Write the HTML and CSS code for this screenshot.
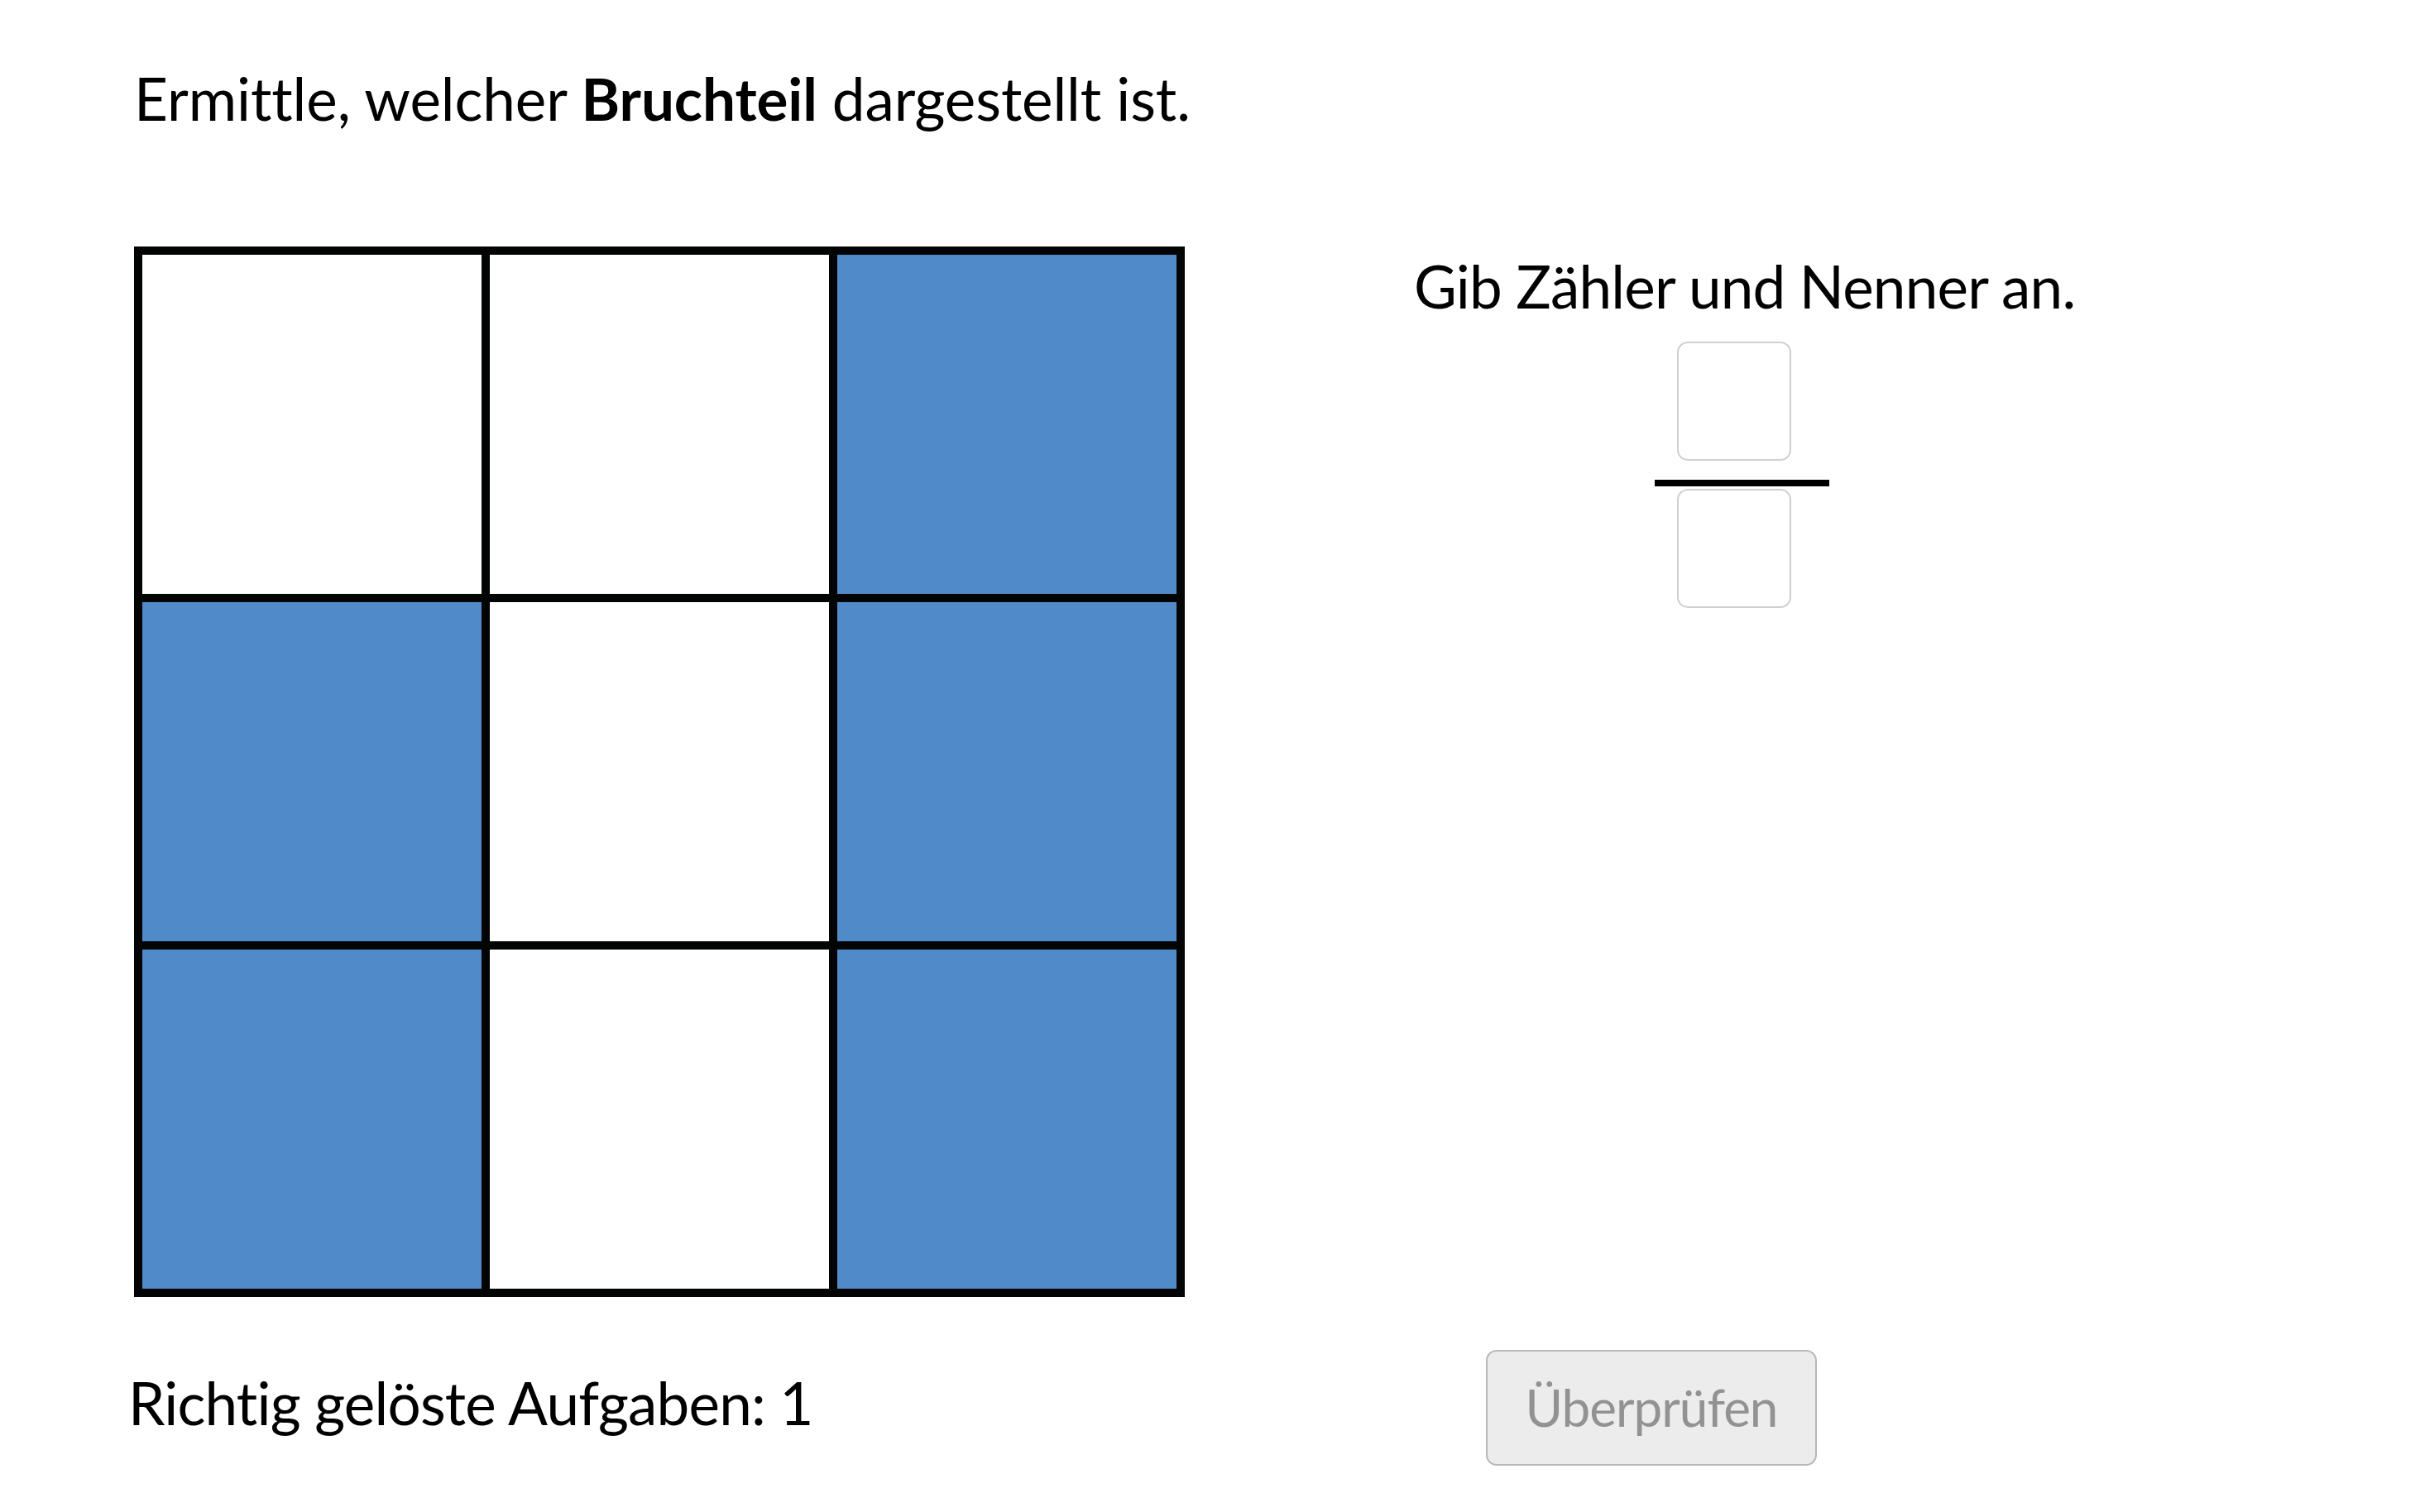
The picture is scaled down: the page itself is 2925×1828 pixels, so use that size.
FILE: index.html
```html
<!DOCTYPE html>
<html lang="de">
<head>
<meta charset="utf-8">
<title>Bruchteil ermitteln</title>
<link rel="stylesheet" href="styles.css">
</head>
<body>
<main class="page">
  <p class="task">Ermittle, welcher <b>Bruchteil</b> dargestellt ist.</p>
  <div class="workspace">
    <div class="grid">
      <div class="cell"></div>
      <div class="cell"></div>
      <div class="cell filled"></div>
      <div class="cell filled"></div>
      <div class="cell"></div>
      <div class="cell filled"></div>
      <div class="cell filled"></div>
      <div class="cell"></div>
      <div class="cell filled"></div>
    </div>
    <div class="answer">
      <p class="prompt">Gib Zähler und Nenner an.</p>
      <div class="fraction">
        <input class="box" type="text" aria-label="Zähler">
        <div class="bar"></div>
        <input class="box" type="text" aria-label="Nenner">
      </div>
    </div>
  </div>
  <div class="footer">
    <p class="score">Richtig gelöste Aufgaben: 1</p>
    <button class="check" type="button" disabled>Überprüfen</button>
  </div>
</main>
</body>
</html>
```

FILE: styles.css
```css
html, body {
  margin: 0;
  padding: 0;
  background: #ffffff;
}

body {
  font-family: Lato, "Open Sans", "Liberation Sans", sans-serif;
  font-variant-ligatures: none;
  color: #000;
}

.page {
  padding: 83px 0 0 162px;
}

.task,
.prompt,
.score {
  margin: 0;
  font-size: 71px;
  line-height: 71px;
  font-weight: 400;
  white-space: nowrap;
}

.task {
  letter-spacing: -0.1px;
}

.prompt,
.score {
  letter-spacing: -0.8px;
}

.task b {
  font-weight: 700;
}

.workspace {
  display: flex;
  align-items: flex-start;
  margin-top: 144px;
}

.grid {
  display: grid;
  grid-template-columns: repeat(3, 410px);
  grid-template-rows: repeat(3, 410px);
  gap: 10px;
  padding: 10px;
  background: #030505;
}

.cell {
  background: #ffffff;
}

.cell.filled {
  background: #508ac8;
}

.answer {
  margin-left: 277px;
  padding-top: 12px;
  display: flex;
  flex-direction: column;
}

.fraction {
  display: flex;
  flex-direction: column;
  align-items: flex-start;
  margin-top: 32px;
  margin-left: 291px;
  width: 211px;
}

.box {
  box-sizing: border-box;
  width: 138px;
  height: 144px;
  margin: 0 0 0 27px;
  border: 2px solid #cfcfcf;
  border-radius: 13px;
  background: #fff;
  padding: 0;
  font: inherit;
}

.bar {
  width: 211px;
  height: 8px;
  background: #000;
  margin: 23px 0 3px;
}

.footer {
  display: grid;
  grid-template-columns: 1634px 400px;
  align-items: start;
  margin-top: 64px;
}

.score {
  margin: 28px 0 0 -7px;
}

.check {
  box-sizing: border-box;
  width: 400px;
  height: 140px;
  border: 2px solid #b8b8b8;
  border-radius: 13px;
  background: #ececec;
  color: #929292;
  font-family: Lato, "Open Sans", "Liberation Sans", sans-serif;
  font-variant-ligatures: none;
  font-size: 62px;
  letter-spacing: -1px;
  padding: 0 0 2px;
}
```
